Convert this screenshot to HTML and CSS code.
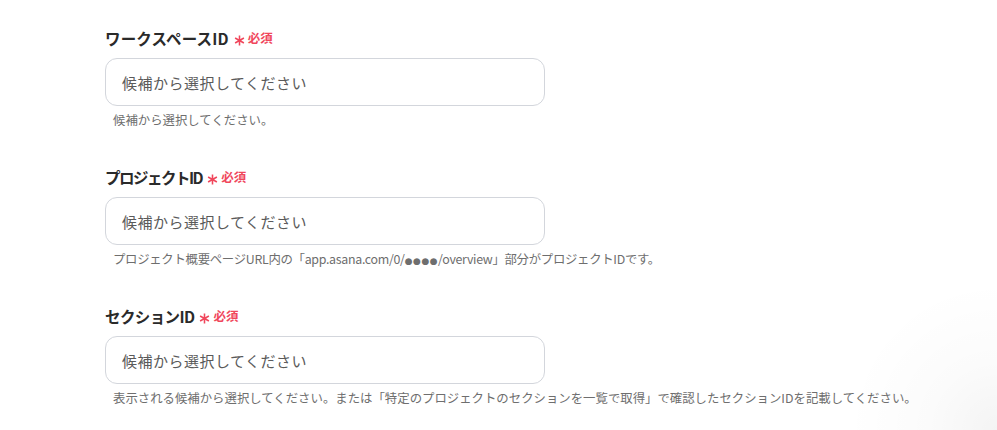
FILE: index.html
```html
<!DOCTYPE html>
<html lang="ja">
<head>
<meta charset="utf-8">
<link rel="stylesheet" href="styles.css">
</head>
<body>
<div class="page">
  <div class="form">
    <div class="field">
      <div class="label label-wide">ワークスペースID<span class="req"><svg class="ast" viewBox="0 0 12 12"><path d="M6 0.5V11.5M1.2 3.25L10.8 8.75M1.2 8.75L10.8 3.25"/></svg>必須</span></div>
      <div class="input">候補から選択してください</div>
      <div class="help">候補から選択してください。</div>
    </div>
    <div class="field">
      <div class="label label-narrow">プロジェクトID<span class="req"><svg class="ast" viewBox="0 0 12 12"><path d="M6 0.5V11.5M1.2 3.25L10.8 8.75M1.2 8.75L10.8 3.25"/></svg>必須</span></div>
      <div class="input">候補から選択してください</div>
      <div class="help help-tight">プロジェクト概要ページURL内の「app.asana.com/0/<span class="dots">●●●●</span>/overview」部分がプロジェクトIDです。</div>
    </div>
    <div class="field">
      <div class="label">セクションID<span class="req"><svg class="ast" viewBox="0 0 12 12"><path d="M6 0.5V11.5M1.2 3.25L10.8 8.75M1.2 8.75L10.8 3.25"/></svg>必須</span></div>
      <div class="input">候補から選択してください</div>
      <div class="help">表示される候補から選択してください。または「特定のプロジェクトのセクションを一覧で取得」で確認したセクションIDを記載してください。</div>
    </div>
  </div>
</div>
</body>
</html>
```

FILE: styles.css
```css
html, body {
  margin: 0;
  padding: 0;
  height: 100%;
}
body {
  font-family: "Noto Sans CJK JP", "Noto Sans", sans-serif;
  background: #ffffff;
  overflow: hidden;
}
.page {
  height: 100%;
  box-sizing: border-box;
  padding: 26px 0 0 105px;
  background: radial-gradient(circle at 100% 100%, rgba(0,0,0,0.045) 0, rgba(0,0,0,0.015) 70px, rgba(0,0,0,0) 150px);
}
.form {
  display: flex;
  flex-direction: column;
  gap: 37px;
}
.field {
  display: flex;
  flex-direction: column;
}
.label {
  font-size: 15.5px;
  font-weight: 700;
  line-height: 24px;
  height: 24px;
  color: #2a2a2a;
  display: flex;
  align-items: center;
  letter-spacing: -0.6px;
}
.label-wide {
  letter-spacing: 0.15px;
}
.label-narrow {
  letter-spacing: -1.5px;
}
.req {
  color: #f0475c;
  font-size: 12.5px;
  font-weight: 700;
  margin-left: 5px;
  display: flex;
  align-items: center;
  letter-spacing: 0;
}
.ast {
  width: 11px;
  height: 11px;
  margin-right: 3px;
  position: relative;
  top: 2px;
  stroke: #f0475c;
  stroke-width: 1.7;
  fill: none;
}
.input {
  margin-top: 8px;
  width: 440px;
  height: 48px;
  box-sizing: border-box;
  border: 1px solid #d3d6dc;
  border-radius: 12px;
  padding: 0 16px;
  display: flex;
  align-items: center;
  font-size: 15px;
  color: #5a5a5a;
  letter-spacing: 0.5px;
}
.help {
  margin-top: 6px;
  padding-left: 8px;
  font-size: 12.4px;
  line-height: 16px;
  height: 16px;
  color: #6e6e6e;
  white-space: nowrap;
}
.help-tight {
  letter-spacing: -0.3px;
}
.dots {
  font-family: "DejaVu Sans", sans-serif;
  font-size: 9px;
  line-height: 1;
  letter-spacing: 0.5px;
}
```
